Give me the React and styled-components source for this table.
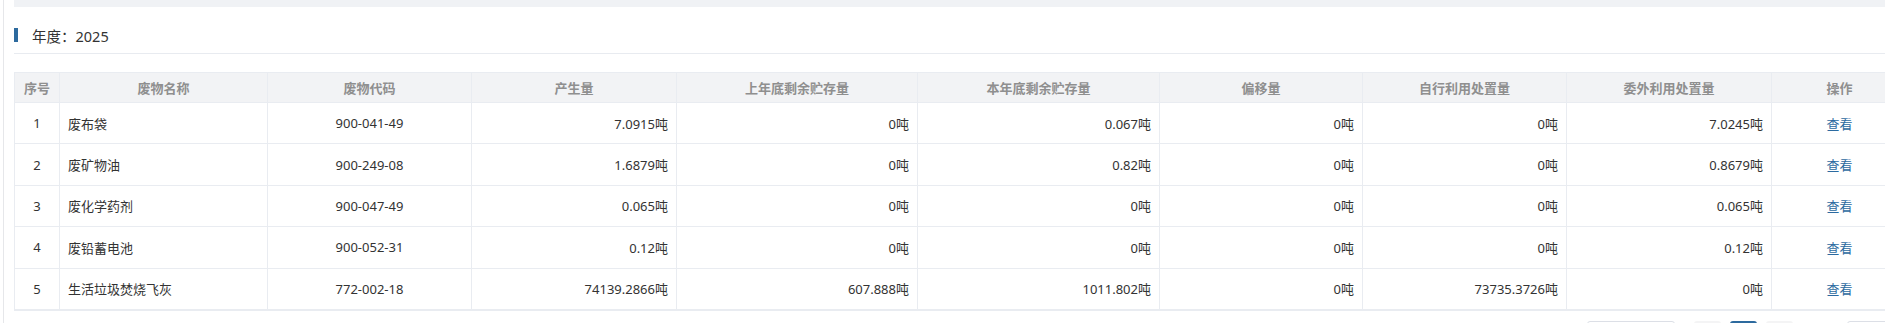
import React from "react";
import styled, { createGlobalStyle } from "styled-components";

const Global = createGlobalStyle`
  html, body { margin: 0; padding: 0; background: #fff; overflow: hidden; }
  body { font-family: "Noto Sans", "Noto Sans CJK SC", sans-serif; color: #333; }
  * { box-sizing: border-box; }
`;

const COLS = [45, 208, 204, 205, 241, 242, 203, 204, 205, 136];
const GRID = COLS.map((w) => `${w}px`).join(" ");

const Page = styled.div`
  display: flex;
  align-items: stretch;
  width: 1912px;
  min-height: 360px;
`;

const Edge = styled.div`
  width: 4px;
  flex: none;
  border-right: 1px solid #e6e7ea;
`;

const Content = styled.div`
  flex: 1;
  padding-left: 10px;
  display: flex;
  flex-direction: column;
  & > * { flex-shrink: 0; }
`;

const TopBar = styled.div`
  height: 7px;
  background: #f0f2f5;
`;

const TitleRow = styled.div`
  height: 47px;
  padding-top: 10px;
  display: flex;
  align-items: flex-start;
  border-bottom: 1px solid #e8ebf0;
`;

const TitleInner = styled.div`
  height: 36px;
  display: flex;
  align-items: center;
`;

const Mark = styled.span`
  width: 4px;
  height: 14px;
  background: #2d6a9e;
`;

const Title = styled.span`
  margin-left: 14px;
  font-size: 14.5px;
  color: #333;
  font-family: "Noto Sans", "Noto Sans CJK SC", sans-serif;
`;

const Spacer = styled.div`
  height: 18px;
`;

const Table = styled.div`
  width: ${COLS.reduce((a, b) => a + b, 0) + 1}px;
  border-top: 1px solid #e9ecf1;
  border-left: 1px solid #e9ecf1;
  border-bottom: 1px solid #e9ecf1;
  font-size: 13px;
`;

const Row = styled.div`
  display: grid;
  grid-template-columns: ${GRID};
  height: ${(p) => (p.$head ? "30px" : "41.4px")};
  background: ${(p) => (p.$head ? "#f2f3f5" : "#fff")};
`;

const Cell = styled.div`
  display: flex;
  align-items: center;
  justify-content: ${(p) =>
    p.$align === "left" ? "flex-start" : p.$align === "right" ? "flex-end" : "center"};
  padding: ${(p) => (p.$align === "left" ? "0 0 0 8px" : p.$align === "right" ? "0 8px 0 0" : "0")};
  border-right: 1px solid #e9ecf1;
  border-bottom: 1px solid #e9ecf1;
  white-space: nowrap;
  overflow: hidden;
  color: ${(p) => (p.$head ? "#8f8f8f" : "#333")};
  font-weight: ${(p) => (p.$head ? 700 : 400)};
`;

const Link = styled.a`
  color: #2c6aa0;
  text-decoration: none;
  cursor: pointer;
`;

/* Pagination: only the top edge of its controls falls inside the frame */
const Pager = styled.div`
  margin-top: 10px;
  display: flex;
  justify-content: flex-end;
  align-items: center;
  padding-right: 19px;
`;

const SizeSelect = styled.div`
  width: 88px;
  height: 28px;
  border: 1px solid #dcdfe6;
  border-radius: 3px;
  background: #fff;
  margin-right: 19px;
`;

const PageBtn = styled.div`
  width: 27px;
  height: 28px;
  border-radius: 3px;
  background: ${(p) => (p.$active ? "#2d6a9e" : "#f4f4f5")};
  margin-left: ${(p) => p.$ml || 0}px;
`;

const JumpInput = styled.div`
  width: 46px;
  height: 28px;
  margin-left: 54px;
  border: 1px solid #dcdfe6;
  border-radius: 3px;
  background: #fff;
`;

const heads = [
  "序号",
  "废物名称",
  "废物代码",
  "产生量",
  "上年底剩余贮存量",
  "本年底剩余贮存量",
  "偏移量",
  "自行利用处置量",
  "委外利用处置量",
  "操作",
];

const rows = [
  ["1", "废布袋", "900-041-49", "7.0915吨", "0吨", "0.067吨", "0吨", "0吨", "7.0245吨"],
  ["2", "废矿物油", "900-249-08", "1.6879吨", "0吨", "0.82吨", "0吨", "0吨", "0.8679吨"],
  ["3", "废化学药剂", "900-047-49", "0.065吨", "0吨", "0吨", "0吨", "0吨", "0.065吨"],
  ["4", "废铅蓄电池", "900-052-31", "0.12吨", "0吨", "0吨", "0吨", "0吨", "0.12吨"],
  ["5", "生活垃圾焚烧飞灰", "772-002-18", "74139.2866吨", "607.888吨", "1011.802吨", "0吨", "73735.3726吨", "0吨"],
];

const aligns = ["center", "left", "center", "right", "right", "right", "right", "right", "right", "center"];

export default function App() {
  return (
    <>
      <Global />
      <Page>
        <Edge />
        <Content>
          <TopBar />
          <TitleRow>
            <TitleInner>
              <Mark />
              <Title>年度：2025</Title>
            </TitleInner>
          </TitleRow>
          <Spacer />
          <Table>
            <Row $head>
              {heads.map((h) => (
                <Cell key={h} $head>
                  {h}
                </Cell>
              ))}
            </Row>
            {rows.map((r) => (
              <Row key={r[0]}>
                {r.map((v, i) => (
                  <Cell key={i} $align={aligns[i]}>
                    {v}
                  </Cell>
                ))}
                <Cell $align="center">
                  <Link>查看</Link>
                </Cell>
              </Row>
            ))}
          </Table>
          <Pager>
            <SizeSelect />
            <PageBtn />
            <PageBtn $active $ml={9} />
            <PageBtn $ml={9} />
            <JumpInput />
          </Pager>
        </Content>
      </Page>
    </>
  );
}
